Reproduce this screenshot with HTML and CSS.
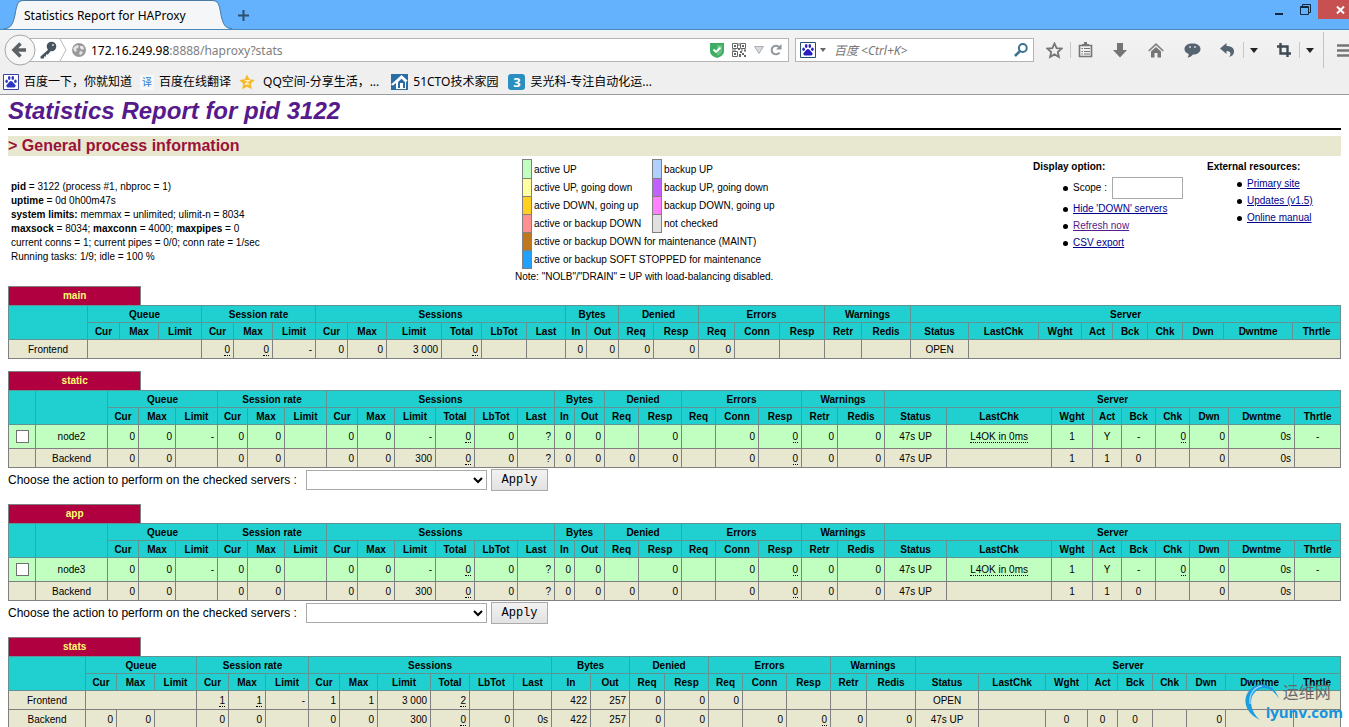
FILE: index.html
```html
<!DOCTYPE html>
<html lang="en">
<head>
<meta charset="utf-8">
<title>Statistics Report for HAProxy</title>
<link rel="stylesheet" href="styles.css">
</head>
<body>
<header class="browser">
  <div class="tabstrip">
    <svg width="20" height="29" viewBox="0 0 20 29"><path d="M0 29C7 29 9 24 11 15C13 3 14 1 20 1V29Z" fill="#f5f6f7"/><path d="M0 28.500C7 28.500 9 24 11 15C13 3 14 .5 20 .5" fill="none" stroke="#4a7ba6"/></svg>
    <div class="tab">Statistics Report for HAProxy</div>
    <svg width="20" height="29" viewBox="0 0 20 29"><path d="M20 29C13 29 11 24 9 15C7 3 6 1 0 1V29Z" fill="#f5f6f7"/><path d="M20 28.500C13 28.500 11 24 9 15C7 3 6 .5 0 .5" fill="none" stroke="#4a7ba6"/></svg>
    <button class="newtab" aria-label="New tab"><svg width="11" height="11" viewBox="0 0 11 11"><path d="M5.500 0V11M0 5.500H11" stroke="#2c5170" stroke-width="2"/></svg></button>
    <div class="winctl">
      <button aria-label="Minimize"><svg width="10" height="12" viewBox="0 0 10 12"><path d="M1 10H9" stroke="#10283c" stroke-width="2"/></svg></button>
      <button aria-label="Restore"><svg width="11" height="11" viewBox="0 0 11 11"><path d="M.5 2.500H8.500V10.500H.5ZM.5 3.500H8.500M2.500 2V.5H10.500V8.500H9" fill="none" stroke="#10283c"/></svg></button>
      <button class="close" aria-label="Close"><svg width="9" height="8" viewBox="0 0 9 8"><path d="M1 .5L8 7.500M8 .5L1 7.500" stroke="#fff" stroke-width="2"/></svg></button>
    </div>
  </div>
  <div class="navbar">
    <button class="back" aria-label="Back"><svg width="32" height="32" viewBox="0 0 32 32"><circle cx="16" cy="16" r="15" fill="#f7f7f7" stroke="#a6a6a6"/><path d="M22 16H11M16.500 9.500L10 16L16.500 22.500" fill="none" stroke="#5c6166" stroke-width="3.500"/></svg></button>
    <div class="urlbar">
      <svg width="18" height="18" viewBox="0 0 18 18"><path d="M10.500 7.500L1.500 15.500V17.500H5V15.500H7V13.500H9L12 9.500Z" fill="#46545f"/><circle cx="12.500" cy="5.500" r="4.800" fill="#46545f"/><circle cx="14" cy="4" r="1" fill="#dde3e8"/></svg>
      <svg class="chev" width="8" height="22" viewBox="0 0 8 22"><path d="M1 0L7 11L1 22" fill="none" stroke="#b9b9b9"/></svg>
      <svg class="globe" width="14" height="14" viewBox="0 0 14 14"><circle cx="7" cy="7" r="7" fill="#9a9a9a"/><path d="M2 4L5 2L7 3L6 5L4 6L5 8L3 9L1 6ZM8 3L11 3L12 6L10 7L8 5ZM8 8L11 9L9 12L7 11Z" fill="#e6e6e6"/></svg>
      <span class="url"><span class="host">172.16.249.98</span>:8888/haproxy?stats</span>
      <svg width="14" height="15" viewBox="0 0 14 15"><path d="M0 0H14V8C14 12 10 14 7 15C4 14 0 12 0 8Z" fill="#3fae63"/><path d="M7 2H12V8C12 11 9 12 7 13Z" fill="#64c083"/><path d="M3.500 6.500L6 9L10.500 4.500" fill="none" stroke="#fff" stroke-width="1.800"/></svg>
      <svg class="qr" width="14" height="14" viewBox="0 0 14 14"><path d="M.5.500H5.500V5.500H.5ZM8.500.500H13.500V5.500H8.500ZM.5 8.500H5.500V13.500H.5Z" fill="none" stroke="#666"/><path d="M2 2h2v2H2zM10 2h2v2h-2zM2 10h2v2H2zM6.500 0h1v3h-1zM6 5h2v2H6zM0 6.500h4v1H0zM9 6.500h2v1H9zM12 6.500h2v2h-2zM8 8h2v2H8zM10 10h2v2h-2zM7 11h2v3H7zM12 12h2v2h-2z" fill="#666"/></svg>
      <svg class="drop" width="10" height="8" viewBox="0 0 10 8"><path d="M.5.500H9.500L5 7.500Z" fill="#d5d9dc" stroke="#aab0b5"/></svg>
      <svg width="12" height="12" viewBox="0 0 12 12"><path d="M9 3A4.300 4.300 0 1 0 9.500 8.500" fill="none" stroke="#8f959a" stroke-width="2"/><path d="M11.500 0V5.500H6Z" fill="#8f959a"/></svg>
    </div>
    <div class="search">
      <svg width="16" height="16" viewBox="0 0 16 16"><path d="M.5.500H15.500V15.500H.5Z" fill="#fff" stroke="#24506a"/><g fill="#2720c0"><ellipse cx="3.600" cy="7.300" rx="1.300" ry="1.800"/><ellipse cx="6.200" cy="4" rx="1.300" ry="1.900"/><ellipse cx="9.800" cy="4" rx="1.300" ry="1.900"/><ellipse cx="12.400" cy="7.300" rx="1.300" ry="1.800"/><path d="M8 7C10 7 10.500 9.500 12 10.500C13.500 12 12 14 10 13.500H6C4 14 2.500 12 4 10.500C5.500 9.500 6 7 8 7Z"/></g></svg>
      <svg width="6" height="4" viewBox="0 0 6 4"><path d="M0 0H6L3 4Z" fill="#666"/></svg>
      <input type="text" placeholder="百度 &lt;Ctrl+K&gt;" aria-label="Search">
      <svg width="14" height="14" viewBox="0 0 14 14"><circle cx="8.800" cy="5" r="3.900" fill="none" stroke="#3d7191" stroke-width="2"/><path d="M6 8L1 13" stroke="#3d7191" stroke-width="2.600"/></svg>
    </div>
    <div class="tools">
      <button aria-label="Bookmark"><svg width="17" height="17" viewBox="0 0 17 17"><path d="M8.500 1.500L10.600 6.100L15.500 6.600L11.800 10L12.900 15L8.500 12.400L4.100 15L5.200 10L1.500 6.600L6.400 6.100Z" fill="none" stroke="#757575" stroke-width="1.800"/></svg></button>
      <i></i>
      <button aria-label="Bookmarks list"><svg width="15" height="16" viewBox="0 0 15 16"><path d="M1.500 3.500H13.500V14.500H1.500Z" fill="none" stroke="#757575" stroke-width="1.600"/><path d="M4 4V2H6V0H9V2H11V4Z" fill="#757575"/><path d="M3.500 6.500H5M6 6.500H12M3.500 9.500H5M6 9.500H12M3.500 12H5M6 12H12" stroke="#757575" stroke-width="1.200"/></svg></button>
      <button aria-label="Downloads"><svg width="14" height="15" viewBox="0 0 14 15"><path d="M4 0H10V7H14L7 14.500L0 7H4Z" fill="#757575"/></svg></button>
      <button aria-label="Home"><svg width="16" height="15" viewBox="0 0 16 15"><path d="M.7 8L8 1.200L15.300 8" fill="none" stroke="#808080" stroke-width="1.700"/><path d="M3 8.500L8 4L13 8.500V14.500H9.500V10H6.500V14.500H3Z" fill="#757575"/></svg></button>
      <button aria-label="Chat"><svg width="17" height="15" viewBox="0 0 17 15"><path d="M8.500.500C13 .5 16.500 2.500 16.500 6S13 11.500 9 11.500C7.500 13.500 5.500 14.500 3.500 14.500C4.500 13.500 4.800 12 4.500 10.800C2 10 .5 8.500 .5 6C.5 2.500 4 .5 8.500 .5Z" fill="#566370"/><circle cx="6" cy="4" r="1" fill="#cfd6dc"/><circle cx="11" cy="4" r="1" fill="#cfd6dc"/></svg></button>
      <button aria-label="Undo"><svg width="15" height="14" viewBox="0 0 15 14"><path d="M6.500 0V3C11 3 14.500 5 14 9C13.800 11.500 12 13.500 9 14C11 12 11.500 8 6.500 8V11L0 5.500Z" fill="#566370"/></svg></button>
      <i></i>
      <button aria-label="Undo list"><svg width="8" height="5" viewBox="0 0 8 5"><path d="M0 0H8L4 5Z" fill="#222"/></svg></button>
      <button class="crop" aria-label="Screenshot"><svg width="14" height="14" viewBox="0 0 14 14"><path d="M3.500 0V10.500H14M0 3.500H10.500V14" fill="none" stroke="#3f4a55" stroke-width="2.400"/></svg></button>
      <i></i>
      <button aria-label="Screenshot list"><svg width="8" height="5" viewBox="0 0 8 5"><path d="M0 0H8L4 5Z" fill="#222"/></svg></button>
      <i class="tall"></i>
      <button class="menu" aria-label="Menu"><svg width="16" height="13" viewBox="0 0 16 13"><path d="M0 1.500H16M0 6.500H16M0 11.500H16" stroke="#757575" stroke-width="2.600"/></svg></button>
    </div>
  </div>
  <nav class="bookmarks">
    <a href="#"><svg width="16" height="16" viewBox="0 0 16 16"><path d="M.5.500H15.500V15.500H.5Z" fill="#fff" stroke="#3a3fa8"/><g fill="#2a38c4"><ellipse cx="3.600" cy="7.300" rx="1.300" ry="1.800"/><ellipse cx="6.200" cy="4" rx="1.300" ry="1.900"/><ellipse cx="9.800" cy="4" rx="1.300" ry="1.900"/><ellipse cx="12.400" cy="7.300" rx="1.300" ry="1.800"/><path d="M8 7C10 7 10.500 9.500 12 10.500C13.500 12 12 14 10 13.500H6C4 14 2.500 12 4 10.500C5.500 9.500 6 7 8 7Z"/></g></svg>百度一下，你就知道</a>
    <a href="#"><span class="fanyi">译</span>百度在线翻译</a>
    <a href="#" class="qq"><svg width="16" height="16" viewBox="0 0 16 16"><path d="M8 .5L10.400 5.300L15.700 6L11.900 9.800L12.800 15.200L8 12.700L3.200 15.200L4.100 9.800L.3 6L5.600 5.300Z" fill="#f6b92b"/><path d="M5.800 6.500H10L6.300 10.200H10.500" fill="none" stroke="#fff3c4" stroke-width="1.200"/></svg>QQ空间-分享生活，...</a>
    <a href="#" class="cto"><svg width="17" height="16" viewBox="0 0 17 16"><path d="M0 0H17V16H0Z" fill="#2a6da6"/><path d="M0 10.500L10.500 1L16.500 6.500L15 8V15H5V9L2 11.500Z" fill="#fff"/><path d="M7 14V8L10.500 4.800L14 8V14Z" fill="#2a6da6"/><path d="M9 14V9H12V14Z" fill="#fff"/></svg>51CTO技术家园</a>
    <a href="#"><span class="three">3</span>吴光科-专注自动化运...</a>
  </nav>
</header>

<main class="page">
  <h1><a href="#">Statistics Report for pid 3122</a></h1>
  <hr>
  <h2>&gt; General process information</h2>

  <section class="info">
    <p class="proc"><b>pid</b> = 3122 (process #1, nbproc = 1)<br>
      <b>uptime</b> = 0d 0h00m47s<br>
      <b>system limits:</b> memmax = unlimited; ulimit-n = 8034<br>
      <b>maxsock</b> = 8034; <b>maxconn</b> = 4000; <b>maxpipes</b> = 0<br>
      current conns = 1; current pipes = 0/0; conn rate = 1/sec<br>
      Running tasks: 1/9; idle = 100 %</p>
    <div class="legend">
      <table>
        <tr class="first"><td class="key up"></td><td>active UP</td><td class="key bup"></td><td>backup UP</td></tr>
        <tr><td class="key going"></td><td>active UP, going down</td><td class="key bgoing"></td><td>backup UP, going down</td></tr>
        <tr><td class="key rising"></td><td>active DOWN, going up</td><td class="key brising"></td><td>backup DOWN, going up</td></tr>
        <tr><td class="key down"></td><td class="wide">active or backup DOWN</td><td class="key nocheck"></td><td>not checked</td></tr>
        <tr><td class="key maint"></td><td colspan="3">active or backup DOWN for maintenance (MAINT)</td></tr>
        <tr><td class="key soft"></td><td colspan="3">active or backup SOFT STOPPED for maintenance</td></tr>
      </table>
      <p>Note: "NOLB"/"DRAIN" = UP with load-balancing disabled.</p>
    </div>
    <div class="opts">
      <b>Display option:</b>
      <ul>
        <li class="scope"><label for="scope">Scope :</label> <input id="scope" type="text"></li>
        <li><a href="#">Hide 'DOWN' servers</a></li>
        <li><a href="#" class="seen">Refresh now</a></li>
        <li><a href="#">CSV export</a></li>
      </ul>
    </div>
    <div class="opts">
      <b>External resources:</b>
      <ul>
        <li><a href="#">Primary site</a></li>
        <li><a href="#">Updates (v1.5)</a></li>
        <li><a href="#">Online manual</a></li>
      </ul>
    </div>
  </section>

  <section class="proxy">
    <h3>main</h3>
    <table class="stats">
      <colgroup><col class="w79"><col class="w32"><col class="w39"><col class="w43"><col class="w32"><col class="w39"><col class="w43"><col class="w32"><col class="w39"><col class="w55"><col class="w40"><col class="w45"><col class="w39"><col class="w21"><col class="w32"><col class="w35"><col class="w45"><col class="w36"><col class="w45"><col class="w45"><col class="w37"><col class="w49"><col class="w58"><col class="w70"><col class="w43"><col class="w31"><col class="w35"><col class="w35"><col class="w41"><col class="w69"><col class="w48"></colgroup>
      <thead>
        <tr><th rowspan="2"></th><th colspan="3">Queue</th><th colspan="3">Session rate</th><th colspan="6">Sessions</th><th colspan="2">Bytes</th><th colspan="2">Denied</th><th colspan="3">Errors</th><th colspan="2">Warnings</th><th colspan="9">Server</th></tr>
        <tr><th>Cur</th><th>Max</th><th>Limit</th><th>Cur</th><th>Max</th><th>Limit</th><th>Cur</th><th>Max</th><th>Limit</th><th>Total</th><th>LbTot</th><th>Last</th><th>In</th><th>Out</th><th>Req</th><th>Resp</th><th>Req</th><th>Conn</th><th>Resp</th><th>Retr</th><th>Redis</th><th>Status</th><th>LastChk</th><th>Wght</th><th>Act</th><th>Bck</th><th>Chk</th><th>Dwn</th><th>Dwntme</th><th>Thrtle</th></tr>
      </thead>
      <tbody>
        <tr><td class="c">Frontend</td><td colspan="3"></td><td><u>0</u></td><td><u>0</u></td><td>-</td><td>0</td><td>0</td><td>3 000</td><td><u>0</u></td><td></td><td></td><td>0</td><td>0</td><td>0</td><td>0</td><td>0</td><td></td><td></td><td></td><td></td><td class="c">OPEN</td><td colspan="8"></td></tr>
      </tbody>
    </table>
  </section>

  <form class="proxy">
    <h3>static</h3>
    <table class="stats">
      <colgroup><col class="w27"><col class="w72"><col class="w31"><col class="w37"><col class="w42"><col class="w30"><col class="w37"><col class="w42"><col class="w31"><col class="w37"><col class="w41"><col class="w39"><col class="w43"><col class="w37"><col class="w20"><col class="w30"><col class="w34"><col class="w43"><col class="w34"><col class="w43"><col class="w43"><col class="w36"><col class="w47"><col class="w62"><col class="w105"><col class="w41"><col class="w29"><col class="w34"><col class="w34"><col class="w39"><col class="w66"><col class="w46"></colgroup>
      <thead>
        <tr><th rowspan="2"></th><th rowspan="2"></th><th colspan="3">Queue</th><th colspan="3">Session rate</th><th colspan="6">Sessions</th><th colspan="2">Bytes</th><th colspan="2">Denied</th><th colspan="3">Errors</th><th colspan="2">Warnings</th><th colspan="9">Server</th></tr>
        <tr><th>Cur</th><th>Max</th><th>Limit</th><th>Cur</th><th>Max</th><th>Limit</th><th>Cur</th><th>Max</th><th>Limit</th><th>Total</th><th>LbTot</th><th>Last</th><th>In</th><th>Out</th><th>Req</th><th>Resp</th><th>Req</th><th>Conn</th><th>Resp</th><th>Retr</th><th>Redis</th><th>Status</th><th>LastChk</th><th>Wght</th><th>Act</th><th>Bck</th><th>Chk</th><th>Dwn</th><th>Dwntme</th><th>Thrtle</th></tr>
      </thead>
      <tbody>
        <tr class="active"><td class="c"><input type="checkbox" aria-label="node2"></td><td class="c">node2</td><td>0</td><td>0</td><td>-</td><td>0</td><td>0</td><td></td><td>0</td><td>0</td><td>-</td><td><u>0</u></td><td>0</td><td>?</td><td>0</td><td>0</td><td></td><td>0</td><td></td><td>0</td><td><u>0</u></td><td>0</td><td>0</td><td class="c">47s UP</td><td class="c"><u>L4OK in 0ms</u></td><td class="c">1</td><td class="c">Y</td><td class="c">-</td><td><u>0</u></td><td>0</td><td>0s</td><td class="c">-</td></tr>
        <tr><td></td><td class="c">Backend</td><td>0</td><td>0</td><td></td><td>0</td><td>0</td><td></td><td>0</td><td>0</td><td>300</td><td><u>0</u></td><td>0</td><td>?</td><td>0</td><td>0</td><td>0</td><td>0</td><td></td><td>0</td><td><u>0</u></td><td>0</td><td>0</td><td class="c">47s UP</td><td></td><td class="c">1</td><td class="c">1</td><td class="c">0</td><td></td><td>0</td><td>0s</td><td></td></tr>
      </tbody>
    </table>
    <div class="action"><label for="act-static">Choose the action to perform on the checked servers :</label> <select id="act-static"><option></option></select> <button type="button">Apply</button></div>
  </form>

  <form class="proxy">
    <h3>app</h3>
    <table class="stats">
      <colgroup><col class="w27"><col class="w72"><col class="w31"><col class="w37"><col class="w42"><col class="w30"><col class="w37"><col class="w42"><col class="w31"><col class="w37"><col class="w41"><col class="w39"><col class="w43"><col class="w37"><col class="w20"><col class="w30"><col class="w34"><col class="w43"><col class="w34"><col class="w43"><col class="w43"><col class="w36"><col class="w47"><col class="w62"><col class="w105"><col class="w41"><col class="w29"><col class="w34"><col class="w34"><col class="w39"><col class="w66"><col class="w46"></colgroup>
      <thead>
        <tr><th rowspan="2"></th><th rowspan="2"></th><th colspan="3">Queue</th><th colspan="3">Session rate</th><th colspan="6">Sessions</th><th colspan="2">Bytes</th><th colspan="2">Denied</th><th colspan="3">Errors</th><th colspan="2">Warnings</th><th colspan="9">Server</th></tr>
        <tr><th>Cur</th><th>Max</th><th>Limit</th><th>Cur</th><th>Max</th><th>Limit</th><th>Cur</th><th>Max</th><th>Limit</th><th>Total</th><th>LbTot</th><th>Last</th><th>In</th><th>Out</th><th>Req</th><th>Resp</th><th>Req</th><th>Conn</th><th>Resp</th><th>Retr</th><th>Redis</th><th>Status</th><th>LastChk</th><th>Wght</th><th>Act</th><th>Bck</th><th>Chk</th><th>Dwn</th><th>Dwntme</th><th>Thrtle</th></tr>
      </thead>
      <tbody>
        <tr class="active"><td class="c"><input type="checkbox" aria-label="node3"></td><td class="c">node3</td><td>0</td><td>0</td><td>-</td><td>0</td><td>0</td><td></td><td>0</td><td>0</td><td>-</td><td><u>0</u></td><td>0</td><td>?</td><td>0</td><td>0</td><td></td><td>0</td><td></td><td>0</td><td><u>0</u></td><td>0</td><td>0</td><td class="c">47s UP</td><td class="c"><u>L4OK in 0ms</u></td><td class="c">1</td><td class="c">Y</td><td class="c">-</td><td><u>0</u></td><td>0</td><td>0s</td><td class="c">-</td></tr>
        <tr><td></td><td class="c">Backend</td><td>0</td><td>0</td><td></td><td>0</td><td>0</td><td></td><td>0</td><td>0</td><td>300</td><td><u>0</u></td><td>0</td><td>?</td><td>0</td><td>0</td><td>0</td><td>0</td><td></td><td>0</td><td><u>0</u></td><td>0</td><td>0</td><td class="c">47s UP</td><td></td><td class="c">1</td><td class="c">1</td><td class="c">0</td><td></td><td>0</td><td>0s</td><td></td></tr>
      </tbody>
    </table>
    <div class="action"><label for="act-app">Choose the action to perform on the checked servers :</label> <select id="act-app"><option></option></select> <button type="button">Apply</button></div>
  </form>

  <section class="proxy">
    <h3>stats</h3>
    <table class="stats">
      <colgroup><col class="w77"><col class="w31"><col class="w38"><col class="w42"><col class="w32"><col class="w37"><col class="w43"><col class="w31"><col class="w38"><col class="w53"><col class="w39"><col class="w44"><col class="w38"><col class="w39"><col class="w39"><col class="w35"><col class="w44"><col class="w34"><col class="w44"><col class="w44"><col class="w36"><col class="w49"><col class="w63"><col class="w67"><col class="w42"><col class="w30"><col class="w35"><col class="w34"><col class="w39"><col class="w68"><col class="w47"></colgroup>
      <thead>
        <tr><th rowspan="2"></th><th colspan="3">Queue</th><th colspan="3">Session rate</th><th colspan="6">Sessions</th><th colspan="2">Bytes</th><th colspan="2">Denied</th><th colspan="3">Errors</th><th colspan="2">Warnings</th><th colspan="9">Server</th></tr>
        <tr><th>Cur</th><th>Max</th><th>Limit</th><th>Cur</th><th>Max</th><th>Limit</th><th>Cur</th><th>Max</th><th>Limit</th><th>Total</th><th>LbTot</th><th>Last</th><th>In</th><th>Out</th><th>Req</th><th>Resp</th><th>Req</th><th>Conn</th><th>Resp</th><th>Retr</th><th>Redis</th><th>Status</th><th>LastChk</th><th>Wght</th><th>Act</th><th>Bck</th><th>Chk</th><th>Dwn</th><th>Dwntme</th><th>Thrtle</th></tr>
      </thead>
      <tbody>
        <tr><td class="c">Frontend</td><td colspan="3"></td><td><u>1</u></td><td><u>1</u></td><td>-</td><td>1</td><td>1</td><td>3 000</td><td><u>2</u></td><td></td><td></td><td>422</td><td>257</td><td>0</td><td>0</td><td>0</td><td></td><td></td><td></td><td></td><td class="c">OPEN</td><td colspan="8"></td></tr>
        <tr><td class="c">Backend</td><td>0</td><td>0</td><td></td><td>0</td><td>0</td><td></td><td>0</td><td>0</td><td>300</td><td><u>0</u></td><td>0</td><td>0s</td><td>422</td><td>257</td><td>0</td><td>0</td><td></td><td>0</td><td><u>0</u></td><td>0</td><td>0</td><td class="c">47s UP</td><td></td><td class="c">0</td><td class="c">0</td><td class="c">0</td><td></td><td>0</td><td></td><td></td></tr>
      </tbody>
    </table>
  </section>
</main>

<div class="watermark">
  <svg width="40" height="40" viewBox="0 0 40 40"><path d="M37 18C33 5 21 0 11 6C0 14 0 30 18 39C8 30 6 17 14 10C21 4 31 7 37 18Z" fill="#1d9be0"/><path d="M8 23C7 13 12 6 20 5" fill="none" stroke="#8fd4f7" stroke-width="1.500"/></svg>
  <span class="cn">运维网</span>
  <span class="en">iyunv.com</span>
</div>
</body>
</html>
```

FILE: styles.css
```css
* { box-sizing: border-box; }
html { height: 100%; overflow: hidden; }
body {
  position: relative;
  height: 100%;
  margin: 0;
  overflow: hidden;
  background: #fff;
  color: #000;
  font-family: "Liberation Sans", Arial, sans-serif;
  font-size: 10px;
}
button { padding: 0; border: 0; background: none; font: inherit; }
svg { display: block; flex: none; }

/* browser window */
.browser {
  background: linear-gradient(#f6f7f7, #efefef 60px);
  border-bottom: 1px solid #9b9b9b;
  font-family: "Noto Sans", "Noto Sans CJK SC", sans-serif;
  font-size: 12px;
}
.tabstrip {
  display: flex;
  align-items: flex-end;
  height: 30px;
  padding-left: 4px;
  background: #64b1fd;
  border-bottom: 1px solid #4a88bf;
}
.tab {
  width: 188px;
  height: 29px;
  background: #f5f6f7;
  border-top: 1px solid #4a7ba6;
  font-size: 12px;
  line-height: 30px;
  white-space: nowrap;
}
.newtab { padding: 8px 6px; }
.winctl { display: flex; align-self: flex-start; margin-left: auto; height: 19px; overflow: hidden; }
.winctl button { display: flex; justify-content: center; align-items: center; width: 26px; }
.winctl .close { width: 31px; padding-left: 14px; background: #c75050; }

.navbar { display: flex; align-items: center; height: 40px; padding-left: 4px; }
.back { position: relative; z-index: 1; margin-right: -6px; }
.urlbar, .search {
  display: flex;
  align-items: center;
  height: 24px;
  background: #fff;
  border: 1px solid #b4b4b4;
}
.urlbar { flex: 1; padding: 0 6px 0 8px; }
.chev { margin: 0 5px 0 2px; }
.globe { margin-right: 5px; }
.url { flex: 1; color: #808080; font-size: 12px; }
.host { color: #000; }
.qr { margin: 0 8px; }
.drop { margin-right: 6px; }
.search { width: 239px; margin: 0 5px 0 6px; padding: 0 5px 0 4px; gap: 4px; }
.search input {
  flex: 1;
  min-width: 0;
  padding: 0 0 0 4px;
  border: 0;
  background: none;
  font: italic 12px "Noto Sans", "Noto Sans CJK SC", sans-serif;
}
.search input::placeholder { color: #777; }
.tools {
  display: grid;
  grid-template-columns: 31px 1px 29px 40px 32px 40px 31px 1px 19px 36px 1px 19px 9px 21px;
  align-items: center;
  width: 310px;
  height: 100%;
  overflow: hidden;
}
.tools button { display: flex; justify-content: center; }
.tools .crop { padding-left: 5px; }
.tools .menu { justify-content: flex-start; padding-left: 9px; }
.tools i { width: 1px; height: 16px; background: #c8c8c8; }
.tools .tall { height: 36px; justify-self: center; background: #c4c4c4; }

.bookmarks { display: flex; align-items: center; gap: 8px; height: 24px; padding-left: 3px; }
.bookmarks a {
  display: flex;
  align-items: center;
  gap: 5px;
  color: #000;
  line-height: 20px;
  text-decoration: none;
  white-space: nowrap;
}
.bookmarks .qq { gap: 8px; }
.bookmarks .cto { margin: 0 2px 0 4px; }
.fanyi { width: 14px; background: #f8f8f8; color: #2a7fd0; font-size: 10px; line-height: 15px; text-align: center; }
.three { width: 17px; background: #2a8fc0; border-radius: 3px; color: #fff; font-size: 13px; font-weight: bold; line-height: 16px; text-align: center; }

/* report */
.page { padding: 0 8px; }
h1 { margin: 0 0 1px; font-size: 24px; font-style: italic; line-height: 32px; }
h1 a { color: #551a8b; text-decoration: none; }
hr { height: 2px; margin: 0 0 6px; border: 0; background: #000; }
h2 { margin: 0; background: #e8e8d0; color: #9b1239; font-size: 16px; line-height: 20px; }

.info { display: grid; grid-template-columns: 507fr 518fr 174fr 134fr; height: 130px; padding-top: 3px; line-height: 14px; white-space: nowrap; }
.info p { margin: 0; }
.proc { padding: 21px 0 0 3px; }
.legend table { margin-left: 7px; border-collapse: collapse; }
.legend td { height: 18px; padding: 1px 8px 0 2px; }
.legend .first td { height: 19px; }
.legend .wide { min-width: 121px; }
.legend td.key { width: 9px; padding: 0; border: 1px solid #808080; }
.legend p { line-height: 16px; }
.up { background: #c0ffc0; }
.going { background: #ffffa0; }
.rising { background: #ffd020; }
.down { background: #ff9090; }
.maint { background: #c07820; }
.soft { background: #20a0ff; }
.bup { background: #b0d0ff; }
.bgoing { background: #c060ff; }
.brising { background: #ff80ff; }
.nocheck { background: #e0e0e0; }
.opts { padding-top: 1px; }
.opts b { display: block; }
.opts ul { margin: 0; padding: 1px 0 0 30px; list-style: none; }
.opts li { line-height: 17px; }
.opts li::before {
  content: "";
  display: inline-block;
  width: 5px;
  height: 5px;
  margin-right: 5px;
  border-radius: 50%;
  background: #000;
  vertical-align: middle;
}
.opts .scope { padding: 2px 0 1px; }
.opts input { width: 71px; height: 22px; margin-left: 2px; border: 1px solid #aaa; vertical-align: middle; }
.opts a { color: #00008b; }
.opts .seen { color: #551a8b; }

.proxy { margin: 0 0 12px; }
h3 {
  width: 10%;
  min-width: 80px;
  margin: 0;
  background: #b00040;
  border: 1px solid #808080;
  border-bottom: 0;
  color: #ffff70;
  font-size: 10px;
  line-height: 18px;
  text-align: center;
}
.stats { width: 100%; table-layout: fixed; border-collapse: collapse; white-space: nowrap; }
.stats th, .stats td { height: 19px; padding: 0 3px; border: 1px solid #808080; text-align: right; }
.stats th { height: 17px; padding: 0; border-color: #5f9493; background: #20d0d0; text-align: center; }
.stats tbody tr { background: #e8e8d0; }
.stats tbody .active { background: #c0ffc0; }
.stats .active td { height: 24px; }
.stats td.c { text-align: center; }
.stats u { border-bottom: 1px dotted #000; text-decoration: none; }
.stats input { appearance: none; display: block; width: 13px; height: 13px; margin: 0 auto; background: #fff; border: 1px solid #707070; }

.action { display: flex; align-items: center; gap: 4px; padding: 1px 0; font-size: 12px; }
.action label { min-width: 294px; }
.action select {
  width: 181px;
  height: 20px;
  border: 1px solid #aaa;
  background: #fff;
}
.action button {
  width: 57px;
  height: 22px;
  border: 1px solid #aaa;
  background: linear-gradient(#f2f2f2, #e2e2e2);
  font-family: "Liberation Mono", monospace;
  font-size: 12px;
}

.w20 { width: 20px; } .w21 { width: 21px; } .w27 { width: 27px; } .w29 { width: 29px; }
.w30 { width: 30px; } .w31 { width: 31px; } .w32 { width: 32px; } .w34 { width: 34px; }
.w35 { width: 35px; } .w36 { width: 36px; } .w37 { width: 37px; } .w38 { width: 38px; }
.w39 { width: 39px; } .w40 { width: 40px; } .w41 { width: 41px; } .w42 { width: 42px; }
.w43 { width: 43px; } .w44 { width: 44px; } .w45 { width: 45px; } .w46 { width: 46px; }
.w47 { width: 47px; } .w48 { width: 48px; } .w49 { width: 49px; } .w53 { width: 53px; }
.w55 { width: 55px; } .w58 { width: 58px; } .w62 { width: 62px; } .w63 { width: 63px; }
.w66 { width: 66px; } .w67 { width: 67px; } .w68 { width: 68px; } .w69 { width: 69px; }
.w70 { width: 70px; } .w72 { width: 72px; } .w77 { width: 77px; } .w79 { width: 79px; }
.w105 { width: 105px; }

/* site mark over the lower right corner */
.watermark {
  position: absolute;
  right: 6px;
  bottom: 6px;
  display: grid;
  grid-template-columns: 24px auto;
  font-family: "Open Sans", "Noto Sans CJK SC", sans-serif;
}
.watermark svg { grid-row: 1 / 3; grid-column: 1; }
.watermark .cn { padding-left: 17px; color: #666; font-size: 16px; line-height: 22px; }
.watermark .en { position: relative; color: #1592e0; font-size: 15px; font-weight: bold; line-height: 18px; }
```
